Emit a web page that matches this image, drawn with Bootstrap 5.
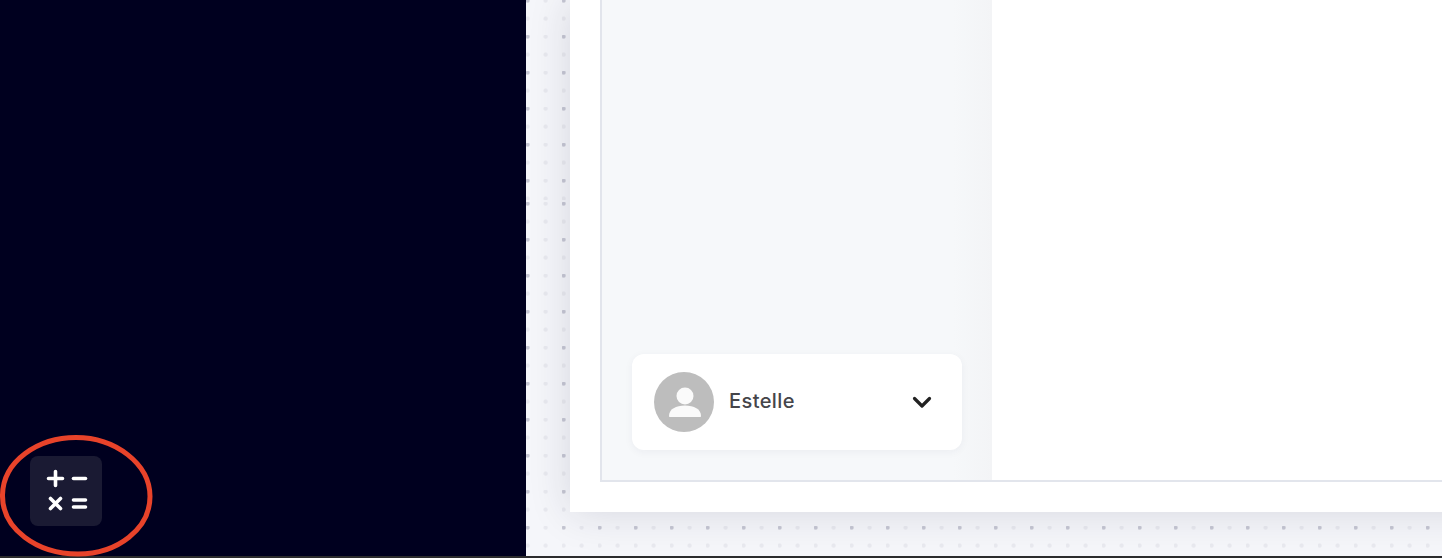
<!DOCTYPE html>
<html lang="en">
<head>
  <meta charset="UTF-8">
  <title>Estelle</title>
  <link href="https://cdn.jsdelivr.net/npm/bootstrap@5.3.3/dist/css/bootstrap.min.css" rel="stylesheet">
  <style>
    html, body { height: 100%; }
    body {
      overflow: hidden;
      background: #2c2c2e;
      font-family: Inter, "Liberation Sans", sans-serif;
    }
    .app-shell { height: 556px; }

    /* dark left pane */
    .left-pane {
      width: 526px;
      background: #00001f;
      padding: 0 0 30px 30px;
    }
    .calc-btn {
      width: 72px;
      height: 70px;
      background: #1a1a33;
      border: 0;
      border-radius: 8px;
    }
    .calc-btn svg { display: block; }
    .red-ring {
      position: absolute;
      left: 0;
      top: 434px;
      pointer-events: none;
    }

    /* dotted backdrop */
    .right-pane { background: #f5f6fa; min-width: 0; }
    .dot-layer {
      position: absolute;
      left: 0;
      right: 0;
      background-image:
        radial-gradient(circle at 1.6px 1.6px, #c6c7d3 1.3px, rgba(198,199,211,0) 2.8px),
        radial-gradient(circle at 19.6px 1.6px, #e8e9ef 1.3px, rgba(232,233,239,0) 2.8px),
        radial-gradient(circle at 1.6px 19.6px, #e8e9ef 1.3px, rgba(232,233,239,0) 2.8px),
        radial-gradient(circle at 19.6px 19.6px, #e8e9ef 1.3px, rgba(232,233,239,0) 2.8px);
      background-size: 36px 36px;
    }
    .dot-top { top: 0; height: 200px; background-position: 0 -1px; }
    .dot-bottom { top: 200px; bottom: 0; background-position: 0 2px; }

    /* white sheet */
    .sheet {
      position: relative;
      height: 512px;
      margin: 0 -60px 0 44px;
      padding: 0 0 30px 30px;
      background: #fff;
      box-shadow: 0 0 40px rgba(30, 30, 60, .14);
    }
    .sheet-frame {
      height: 482px;
      border-left: 2px solid #e2e5ec;
      border-bottom: 2px solid #e2e5ec;
    }
    .side-col {
      width: 390px;
      padding: 0 30px 30px;
      background: linear-gradient(to right, #f6f8fa 90%, #f3f4f6);
    }
    .user-box {
      height: 96px;
      padding: 0 30px 0 22px;
      gap: 16px;
      border-radius: 12px;
      box-shadow: 0 2px 8px rgba(30, 40, 70, .05);
    }
    .user-avatar { width: 60px; height: 60px; flex: none; }
    .user-name {
      font-size: 20px;
      font-weight: 500;
      line-height: 1;
      color: #45454a;
      letter-spacing: .4px;
      margin-top: -3px;
      margin-left: -1px;
    }
  </style>
</head>
<body>

  <div class="app-shell d-flex position-relative">
    <div class="left-pane d-flex align-items-end flex-shrink-0">
      <button class="calc-btn d-flex align-items-center justify-content-center p-0" type="button" aria-label="Calculator">
        <svg width="72" height="70" viewBox="0 0 72 70" fill="none" stroke="#fff" stroke-width="3.600" stroke-linecap="round">
          <path d="M18.500 22.500h14M25.500 15.500v14"/>
          <path d="M43.500 22.500h12"/>
          <path d="M20.500 42.500l10 10M30.500 42.500l-10 10"/>
          <path d="M43.500 44h12M43.500 51h12"/>
        </svg>
      </button>
    </div>

    <svg class="red-ring" width="156" height="124" viewBox="0 0 156 124" fill="none">
      <path d="M2.500 61C3 27 38 3.500 76 3.500c39 0 74 26 74 59 0 32-32 57.500-72 57.500C37 120 2 95 2.500 61z" stroke="#e8432a" stroke-width="5"/>
    </svg>

    <div class="right-pane flex-grow-1 position-relative overflow-hidden">
      <div class="dot-layer dot-top"></div>
      <div class="dot-layer dot-bottom"></div>

      <div class="sheet">
        <div class="sheet-frame d-flex">
          <div class="side-col d-flex align-items-end flex-shrink-0">
            <div class="user-box bg-white d-flex align-items-center w-100">
              <svg class="user-avatar" viewBox="0 0 60 60">
                <circle cx="30" cy="30" r="30" fill="#bdbdbd"/>
                <circle cx="31" cy="24" r="8.500" fill="#fafafa"/>
                <path d="M15 44c0-7 7-10.500 16-10.500S47 37 47 44c0 .6-.4 1-1 1H16c-.6 0-1-.4-1-1z" fill="#fafafa"/>
              </svg>
              <span class="user-name flex-grow-1">Estelle</span>
              <svg width="20" height="13" viewBox="0 0 20 13" fill="none" stroke="#222" stroke-width="3.200" stroke-linecap="round" stroke-linejoin="round">
                <path d="M2.500 2.500L10 10l7.500-7.500"/>
              </svg>
            </div>
          </div>
          <div class="flex-grow-1 bg-white"></div>
        </div>
      </div>
    </div>
  </div>

  <script src="https://cdn.jsdelivr.net/npm/bootstrap@5.3.3/dist/js/bootstrap.bundle.min.js"></script>
</body>
</html>
